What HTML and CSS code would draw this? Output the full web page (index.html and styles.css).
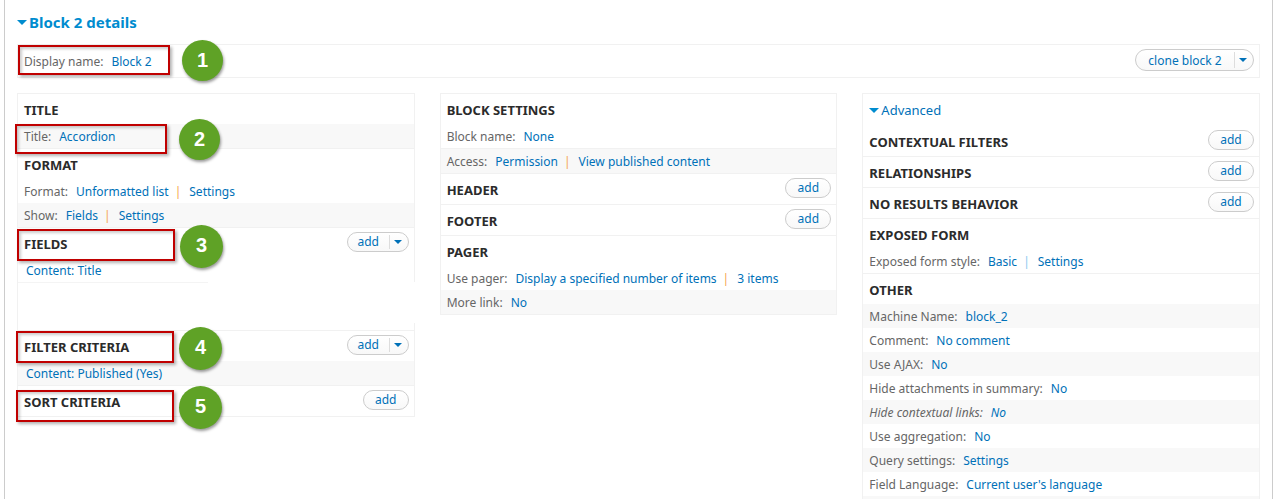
FILE: index.html
```html
<!DOCTYPE html>
<html lang="en">
<head>
<meta charset="utf-8">
<title>Block 2 details</title>
<link rel="stylesheet" href="styles.css">
</head>
<body>
<main class="details">
  <h1 class="details-title"><span class="arrow"></span><a href="#">Block 2 details</a></h1>

  <div class="display-bar">
    <div class="setting"><span class="label">Display name:</span><a href="#">Block 2</a></div>
    <div class="split split-large"><button type="button" class="action">clone block 2</button><button type="button" class="toggle" aria-label="More actions"><span class="arrow arrow-small"></span></button></div>
  </div>

  <div class="columns">
    <div class="column column-first">
      <section class="bucket">
        <div class="head"><h2>Title</h2></div>
        <div class="row shaded"><span class="label">Title:</span><a href="#">Accordion</a></div>
      </section>
      <section class="bucket">
        <div class="head"><h2>Format</h2></div>
        <div class="row"><span class="label">Format:</span><a href="#">Unformatted list</a><span class="sep">|</span><a href="#">Settings</a></div>
        <div class="row shaded"><span class="label">Show:</span><a href="#">Fields</a><span class="sep">|</span><a href="#">Settings</a></div>
      </section>
      <section class="bucket">
        <div class="head"><h2>Fields</h2><div class="split"><button type="button" class="action">add</button><button type="button" class="toggle" aria-label="More field actions"><span class="arrow arrow-small"></span></button></div></div>
        <div class="row item"><a href="#">Content: Title</a></div>
        <div class="blank"></div>
      </section>
      <section class="bucket">
        <div class="head"><h2>Filter criteria</h2><div class="split"><button type="button" class="action">add</button><button type="button" class="toggle" aria-label="More filter actions"><span class="arrow arrow-small"></span></button></div></div>
        <div class="row item shaded"><a href="#">Content: Published (Yes)</a></div>
      </section>
      <section class="bucket">
        <div class="head"><h2>Sort criteria</h2><button type="button" class="add">add</button></div>
      </section>
    </div>

    <div class="column">
      <section class="bucket">
        <div class="head"><h2>Block settings</h2></div>
        <div class="row"><span class="label">Block name:</span><a href="#">None</a></div>
      </section>
      <section class="bucket">
        <div class="row shaded"><span class="label">Access:</span><a href="#">Permission</a><span class="sep">|</span><a href="#">View published content</a></div>
      </section>
      <section class="bucket">
        <div class="head"><h2>Header</h2><button type="button" class="add">add</button></div>
      </section>
      <section class="bucket">
        <div class="head"><h2>Footer</h2><button type="button" class="add">add</button></div>
      </section>
      <section class="bucket">
        <div class="head"><h2>Pager</h2></div>
        <div class="row"><span class="label">Use pager:</span><a href="#">Display a specified number of items</a><span class="sep">|</span><a href="#">3 items</a></div>
        <div class="row shaded"><span class="label">More link:</span><a href="#">No</a></div>
      </section>
    </div>

    <div class="column column-advanced">
      <div class="advanced-title"><span class="arrow"></span><a href="#">Advanced</a></div>
      <section class="bucket">
        <div class="head"><h2>Contextual filters</h2><button type="button" class="add">add</button></div>
      </section>
      <section class="bucket">
        <div class="head"><h2>Relationships</h2><button type="button" class="add">add</button></div>
      </section>
      <section class="bucket">
        <div class="head"><h2>No results behavior</h2><button type="button" class="add">add</button></div>
      </section>
      <section class="bucket">
        <div class="head"><h2>Exposed form</h2></div>
        <div class="row"><span class="label">Exposed form style:</span><a href="#">Basic</a><span class="sep sep-blue">|</span><a href="#">Settings</a></div>
      </section>
      <section class="bucket bucket-last">
        <div class="head"><h2>Other</h2></div>
        <div class="row shaded"><span class="label">Machine Name:</span><a href="#">block_2</a></div>
        <div class="row"><span class="label">Comment:</span><a href="#">No comment</a></div>
        <div class="row shaded"><span class="label">Use AJAX:</span><a href="#">No</a></div>
        <div class="row"><span class="label">Hide attachments in summary:</span><a href="#">No</a></div>
        <div class="row shaded defaulted"><span class="label">Hide contextual links:</span><a href="#">No</a></div>
        <div class="row"><span class="label">Use aggregation:</span><a href="#">No</a></div>
        <div class="row shaded"><span class="label">Query settings:</span><a href="#">Settings</a></div>
        <div class="row"><span class="label">Field Language:</span><a href="#">Current user's language</a></div>
        <div class="rest"></div>
      </section>
    </div>
  </div>

  <div class="mark mark-1"></div><div class="badge badge-1">1</div>
  <div class="mark mark-2"></div><div class="badge badge-2">2</div>
  <div class="mark mark-3"></div><div class="badge badge-3">3</div>
  <div class="mark mark-4"></div><div class="badge badge-4">4</div>
  <div class="mark mark-5"></div><div class="badge badge-5">5</div>
</main>
</body>
</html>
```
FILE: styles.css
```css
* { box-sizing: border-box; }

body {
  margin: 0 15px 0 4px;
  background: #fff;
  color: #666;
  font: 12px/22px "Noto Sans", "Open Sans", sans-serif;
}

a { color: #0071b8; text-decoration: none; }
h1, h2 { margin: 0; }

.details {
  position: relative;
  display: flex;
  flex-direction: column;
  min-height: 100vh;
  padding: 0 12px;
  border: solid #ccc;
  border-width: 0 1px;
}

.details-title {
  display: flex;
  align-items: center;
  gap: 2px;
  height: 44px;
  font-size: 15px;
}
.details-title a { color: #008ccf; }

.arrow {
  border: 5px solid transparent;
  border-top-color: #008ccf;
  border-bottom: 0;
}
.arrow-small {
  display: block;
  border-width: 4px 4px 0;
  border-top-color: #0071b8;
}

.display-bar {
  display: flex;
  justify-content: space-between;
  align-items: flex-start;
  height: 34px;
  margin-bottom: 15px;
  padding: 4px 5px 4px 6px;
  border: 1px solid #f1f1f1;
}
.setting { padding-top: 2px; }

.label { margin-right: 8px; }

.columns {
  flex: 1;
  display: grid;
  grid-template-columns: repeat(3, 1fr);
  align-items: start;
  gap: 25px;
}

.column { border: solid #f1f1f1; border-width: 1px 1px 0; }
.column-first { border-right: 0; }
.column-first .bucket { border-right: 1px solid #f1f1f1; }
.column-advanced {
  align-self: stretch;
  display: flex;
  flex-direction: column;
}

.bucket { border-bottom: 1px solid #f1f1f1; }
.bucket-last {
  flex: 1;
  display: flex;
  flex-direction: column;
  border-bottom: 0;
}
.rest { flex: 1; background: #f8f8f8; }

.head {
  display: flex;
  justify-content: space-between;
  align-items: flex-start;
  height: 30px;
  padding: 4px 5px 0 6px;
}
.head h2 {
  color: #2b2b2b;
  font-size: 13px;
  line-height: 24px;
  text-transform: uppercase;
}

.row { padding: 2px 6px 0; white-space: nowrap; }
.item { padding-left: 8px; }
.shaded { background: #f8f8f8; }
.defaulted { font-style: italic; }
.sep { margin: 0 8px 0 6px; color: #f5a54a; }
.sep-blue { color: #8cc8f0; }

/* Covers the column's right edge for the height of the empty list. */
.blank {
  height: 41px;
  margin: 0 -1px 7px 0;
  background: #fff;
}
.blank::before {
  content: "";
  display: block;
  width: 190px;
  border-top: 1px solid #f4f4f4;
}

.advanced-title {
  display: flex;
  align-items: center;
  gap: 2px;
  height: 32px;
  padding-left: 6px;
  font-size: 13px;
}

button {
  margin: 0;
  padding: 0;
  border: 0;
  background: none;
  color: #0071b8;
  font: 12px/18px "Noto Sans", "Open Sans", sans-serif;
}
.add, .split {
  height: 20px;
  border: 1px solid #ccc;
  border-radius: 11px;
  background: linear-gradient(#fff, #f8f8f8);
}
.add { width: 46px; }
.split { display: flex; align-items: center; width: 62px; }
.split .action { flex: 1; }
.toggle {
  display: flex;
  align-items: center;
  justify-content: center;
  width: 19px;
  height: 14px;
  padding-right: 2px;
  border-left: 1px solid #ddd;
}
.split-large { width: 119px; height: 22px; }
.split-large .action { line-height: 20px; padding-top: 1px; }
.split-large .toggle { height: 16px; }

.mark {
  position: absolute;
  width: 158px;
  height: 32px;
  border: 2px solid #c00000;
  box-shadow: 2px 2px 3px rgba(0, 0, 0, 0.3), inset 2px 2px 3px rgba(0, 0, 0, 0.2);
  pointer-events: none;
}
.mark-1 { left: 13px; top: 45px; width: 152px; height: 30px; }
.mark-2 { left: 10px; top: 124px; width: 152px; height: 30px; }
.mark-3 { left: 12px; top: 229px; }
.mark-4 { left: 11px; top: 331px; }
.mark-5 { left: 11px; top: 390px; }

.badge {
  position: absolute;
  width: 43px;
  height: 43px;
  border-radius: 50%;
  background: #5fa226;
  box-shadow: 1px 2px 3px rgba(0, 0, 0, 0.4);
  color: #fff;
  font: bold 20px/41px "Liberation Sans", Arial, sans-serif;
  text-align: center;
}
.badge-1, .badge-2 { width: 41px; height: 41px; }
.badge-1 { left: 177px; top: 40px; }
.badge-2 { left: 174px; top: 119px; }
.badge-3 { left: 175px; top: 225px; }
.badge-4 { left: 174px; top: 327px; }
.badge-5 { left: 174px; top: 386px; }
```
